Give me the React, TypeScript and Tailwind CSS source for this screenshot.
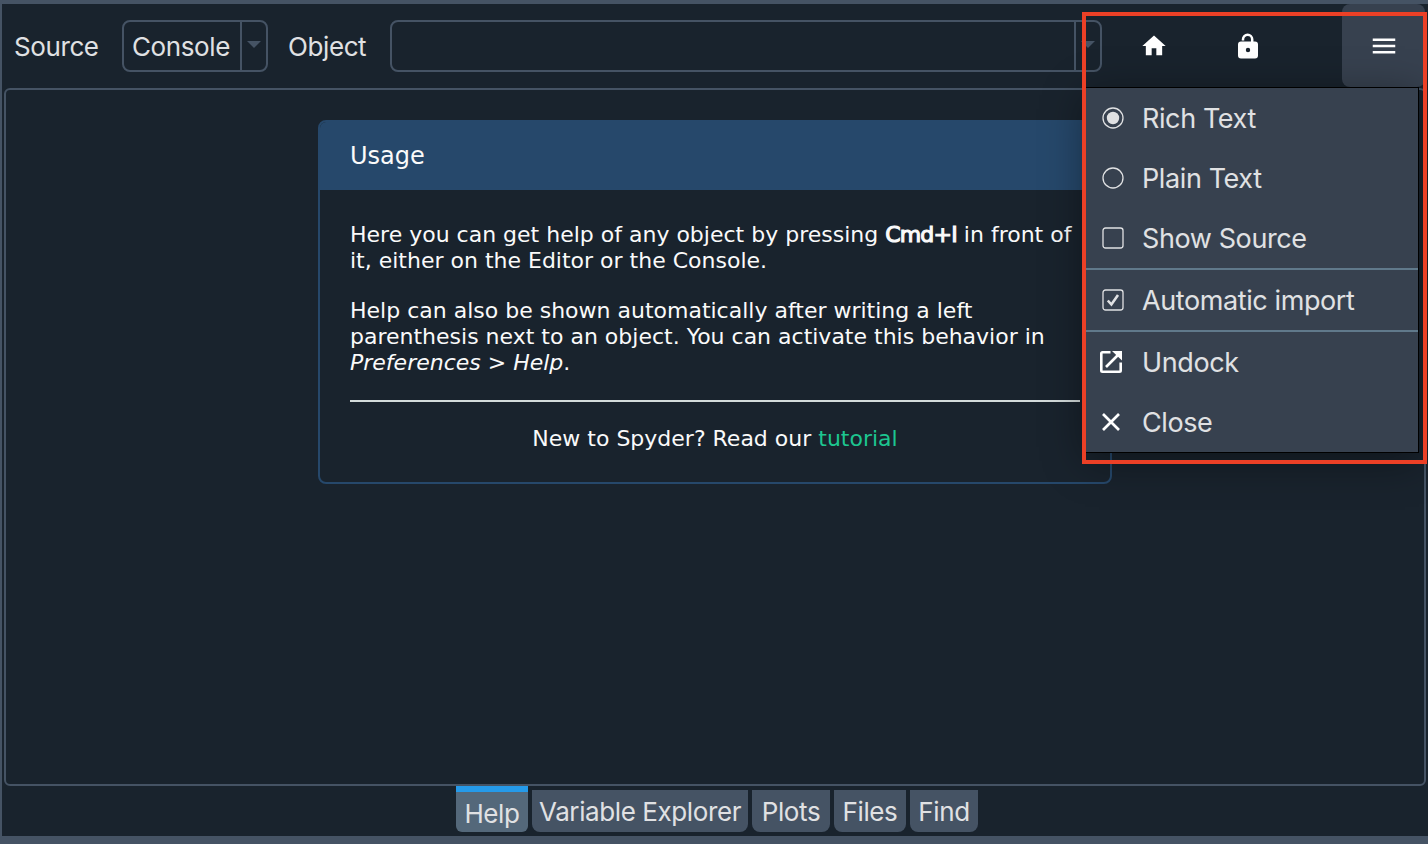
import React from "react";
import { MdHome, MdMenu } from "react-icons/md";

const ui = "font-['Inter','Liberation_Sans',sans-serif] font-normal whitespace-nowrap text-[#e0e1e3]";

function Caret() {
  return (
    <svg width="14" height="7" viewBox="0 0 14 7" className="mb-1">
      <path d="M0 0H14L7 7Z" fill="#455364" />
    </svg>
  );
}

function LockOpen() {
  return (
    <svg width="28" height="28" viewBox="0 0 24 24" fill="#fff">
      <path d="M18 8h-1V6c0-2.76-2.24-5-5-5-2.4 0-4.43 1.7-4.9 4L9 5.5C9.3 4 10.5 2.9 12 2.9c1.7 0 3.1 1.4 3.1 3.1v2H5c-1.100-2 .9-2 2v10c0 1.100.9 2 2 2h13c1.100 0 2-.9 2-2V10c0-1.100-.9-2-2-2z" />
    </svg>
  );
}

function Padlock() {
  return (
    <svg width="20" height="26" viewBox="0 0 20 26">
      <path d="M5 7.500V6.300A4.600 4.600 0 0 1 14.200 6.300V10" fill="none" stroke="#fff" strokeWidth="2.500" />
      <path fillRule="evenodd" d="M3 8.500H17A3 3 0 0 1 20 11.500V22.500A3 3 0 0 1 17 25.500H3A3 3 0 0 1 0 22.500V11.500A3 3 0 0 1 3 8.500ZM10 14.800A2.200 2.200 0 1 0 10 19.200A2.200 2.200 0 1 0 10 14.800Z" fill="#fff" />
    </svg>
  );
}

function Radio({ on }: { on?: boolean }) {
  return (
    <svg width="24" height="24" viewBox="0 0 24 24">
      <circle cx="12" cy="12" r="10" fill="none" stroke="#e0e1e3" strokeWidth="1.3" />
      {on && <circle cx="12" cy="12" r="6.2" fill="#e0e1e3" />}
    </svg>
  );
}

function Check({ on }: { on?: boolean }) {
  return (
    <svg width="24" height="24" viewBox="0 0 24 24" fill="none" stroke="#e0e1e3">
      <rect x="2" y="2" width="20" height="20" rx="2.500" strokeWidth="1.300" />
      {on && <path d="M6.800 12.500L10.400 16.500L17 7" strokeWidth="2.600" />}
    </svg>
  );
}

function Undock() {
  return (
    <svg width="24" height="24" viewBox="0 0 24 24" fill="none" stroke="#fff" strokeWidth="2.600">
      <path d="M11.500 2.300H3.500Q2.300 2.300 2.300 3.500V20.500Q2.300 21.700 3.500 21.700H20.500Q21.700 21.700 21.700 20.500V12.500" />
      <path d="M7 17L19.500 4.500" />
      <path d="M13 1H23V10.500Z" fill="#fff" stroke="none" />
    </svg>
  );
}

function Cross() {
  return (
    <svg width="24" height="24" viewBox="0 0 24 24" stroke="#fff" strokeWidth="2.700">
      <path d="M4 4L20 20M20 4L4 20" />
    </svg>
  );
}

function Item({ icon, label, className, shift }: { icon: React.ReactNode; label: string; className: string; shift?: boolean }) {
  return (
    <div className="flex h-[60px] items-center">
      <span className={shift ? "ml-[13px] mr-[19px]" : "ml-[15px] mr-[17px]"}>{icon}</span>
      <span className={`${ui} relative top-px text-[27px] leading-[60px] ${className}`}>{label}</span>
    </div>
  );
}

const tabs = [
  { label: "Variable Explorer", className: "w-[216px] tracking-[-0.4px]" },
  { label: "Plots", className: "w-[78px] tracking-[-0.4px]" },
  { label: "Files", className: "w-[72px] tracking-[-0.4px]" },
  { label: "Find", className: "w-[68px] tracking-[-0.4px]" },
];

export default function App() {
  return (
    <div className="relative flex h-[844px] w-[1428px] flex-col overflow-hidden border-t-4 border-b-8 border-l-2 border-[#455364] bg-[#19232d]">
      <header className="flex h-[84px] shrink-0 items-start">
        <span className={`${ui} mt-4 ml-3 w-[108px] text-[26px] leading-[54px] tracking-[-0.4px]`}>Source</span>
        <div className="mt-4 flex h-[52px] w-[146px] rounded-lg border-2 border-[#455364]">
          <span className={`${ui} w-[116px] pl-2 text-[26px] leading-[50px] tracking-[-0.4px]`}>Console</span>
          <span className="flex flex-1 items-center justify-center border-l-2 border-[#455364]"><Caret /></span>
        </div>
        <span className={`${ui} mt-4 ml-5 w-[102px] text-[26px] leading-[54px] tracking-[-0.4px]`}>Object</span>
        <div className="mt-4 flex h-[52px] w-[712px] rounded-lg border-2 border-[#455364]">
          <span className="flex-1" />
          <span className="flex w-[26px] items-center justify-center border-l-2 border-[#455364]"><Caret /></span>
        </div>
        <span className="mt-[28px] ml-[38px]"><MdHome size={28} color="#fff" /></span>
        <span className="mt-[29px] ml-[70px]"><Padlock /></span>
        <div className="ml-[84px] flex h-[83px] w-[83px] items-center justify-center rounded-lg bg-[#37414f]">
          <MdMenu size={30} color="#fff" />
        </div>
      </header>
      <main className="ml-[2px] flex h-[698px] w-[1422px] shrink-0 flex-col rounded-md border-2 border-[#455364] pt-[30px] pl-[312px]">
        <section className="h-[364px] w-[794px] overflow-hidden rounded-lg border-2 border-[#26486b] font-['DejaVu_Sans',sans-serif] text-[22px] leading-[26px] text-[#fafafa]">
          <h1 className="h-[68px] bg-[#26486b] pl-[30px] text-[24px] leading-[68px]">Usage</h1>
          <div className="px-[30px] pt-8 whitespace-nowrap">
            <p>
              Here you can get help of any object by pressing <span className="tracking-[-0.8px] [-webkit-text-stroke:1.1px_#fafafa]">Cmd+I</span> in front of
              <br />it, either on the Editor or the Console.
            </p>
            <p className="mt-6">
              Help can also be shown automatically after writing a left
              <br />parenthesis next to an object. You can activate this behavior in
              <br /><i>Preferences &gt; Help</i>.
            </p>
            <div className="mt-6 h-[2px] bg-[#d3dbdb]" />
            <p className="mt-6 text-center">New to Spyder? Read our <span className="text-[#1dc690]">tutorial</span></p>
          </div>
        </section>
      </main>
      <nav className="ml-[454px] flex items-start gap-1">
        <div className={`${ui} h-[46px] w-[72px] rounded-b-md border-t-[6px] border-[#259ae9] bg-[#54687a] text-center text-[26px] leading-[43px] tracking-[-0.4px]`}>Help</div>
        {tabs.map((t) => (
          <div key={t.label} className={`${ui} mt-1 h-[42px] rounded-b-lg bg-[#455364] text-center text-[26px] leading-[43px] ${t.className}`}>{t.label}</div>
        ))}
      </nav>
      <aside className="absolute top-[83px] left-[1083px] w-[334px] border border-black bg-[#37414f] shadow-[0_8px_40px_rgba(0,0,0,0.4)]">
        <Item icon={<Radio on />} label="Rich Text" className="tracking-[-0.4px]" />
        <Item icon={<Radio />} label="Plain Text" className="tracking-[-0.4px]" />
        <Item icon={<Check />} label="Show Source" className="tracking-[-0.4px]" />
        <div className="h-[2px] bg-[#60798b]" />
        <Item icon={<Check on />} label="Automatic import" className="tracking-[-0.4px]" />
        <div className="h-[2px] bg-[#60798b]" />
        <Item shift icon={<Undock />} label="Undock" className="tracking-[-0.4px]" />
        <Item shift icon={<Cross />} label="Close" className="tracking-[-0.4px]" />
      </aside>
      <div className="pointer-events-none absolute top-[8px] left-[1080px] h-[452px] w-[345px] border-4 border-[#ec4026]" />
    </div>
  );
}
